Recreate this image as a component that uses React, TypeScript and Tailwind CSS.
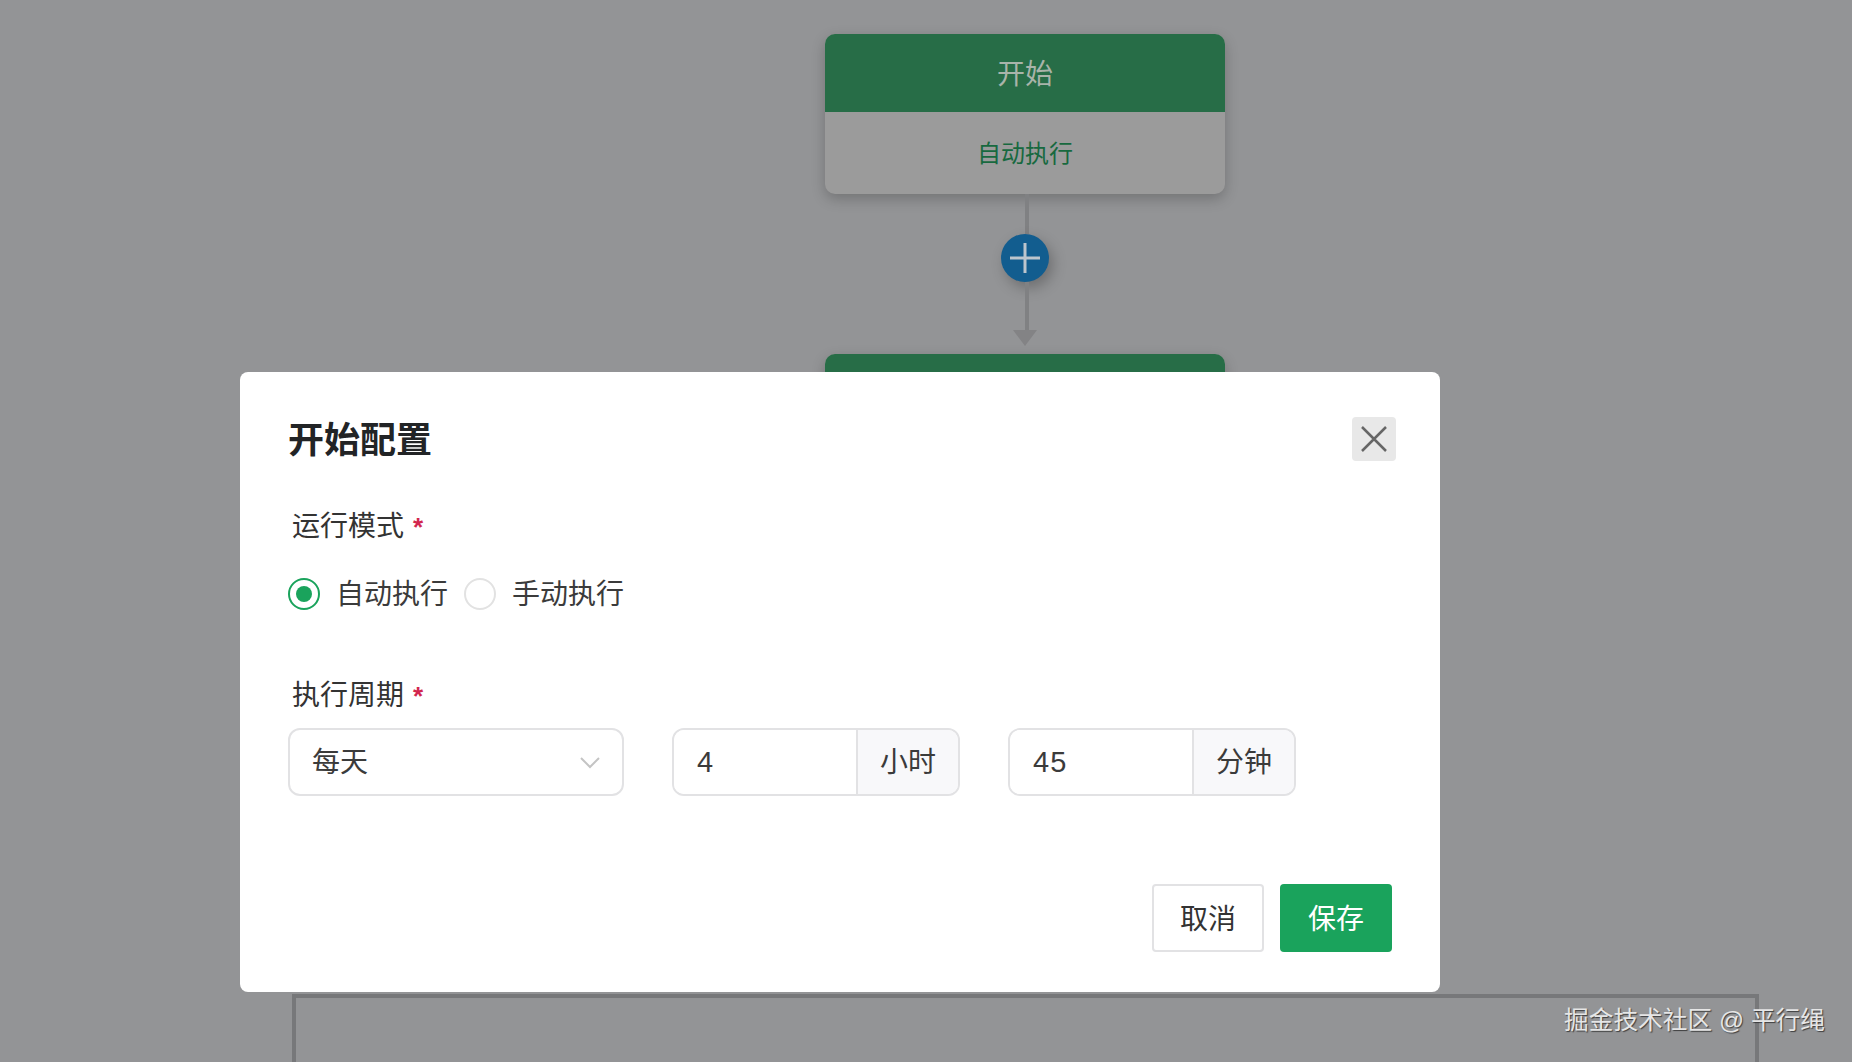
const FONT = "font-['Liberation_Sans','Noto_Sans_CJK_SC',sans-serif]";

function Node({ title, sub }: { title: string; sub: string }) {
  return (
    <div className="w-[400px] shrink-0 overflow-hidden rounded-[10px] bg-[#9b9b9b] shadow-[0_5px_14px_rgba(0,0,0,0.22)]">
      <div className="flex h-[78px] items-center justify-center bg-[#276d47] pt-[4px] text-[28px] text-[#a9b4aa]">{title}</div>
      <div className="flex h-[82px] items-center justify-center pt-[2px] text-[24px] text-[#17693f]">{sub}</div>
    </div>
  );
}

function Label({ text }: { text: string }) {
  return (
    <div className="flex h-[40px] items-center pl-[4px] pt-[4px] text-[28px] leading-none text-[#333333]">
      {text}
      <span className="ml-[9px] text-[26px] font-bold text-[#d2264f]">*</span>
    </div>
  );
}

function Radio({ label, checked }: { label: string; checked?: boolean }) {
  return (
    <div className="flex items-center">
      <span
        className={`flex h-[32px] w-[32px] items-center justify-center rounded-full border-2 ${
          checked ? "border-[#1aa35c]" : "border-[#e2e2e2]"
        }`}
      >
        {checked && <span className="h-[16px] w-[16px] rounded-full bg-[#1aa35c]" />}
      </span>
      <span className="ml-[16px] pt-[2px] text-[28px] leading-none text-[#3b3b3b]">{label}</span>
    </div>
  );
}

function UnitInput({ value, unit }: { value: string; unit: string }) {
  return (
    <div className="flex h-[68px] w-[288px] overflow-hidden rounded-[12px] border-2 border-[#e2e2e4]">
      <input
        readOnly
        value={value}
        className="w-[182px] bg-white pl-[23px] pt-[2px] text-[29px] tracking-[1px] text-[#3b3b3b] outline-none"
      />
      <div className="flex flex-1 items-center justify-center border-l-2 border-[#e2e2e4] bg-[#f8f8fa] pt-[2px] text-[28px] text-[#3b3b3b]">
        {unit}
      </div>
    </div>
  );
}

export default function App() {
  return (
    <div className={`relative h-[1062px] w-full overflow-hidden bg-[#939496] ${FONT}`}>
      {/* flow behind the dialog */}
      <div className="ml-[292px] flex h-[1062px] w-[1466px] flex-col items-center pt-[34px]">
        <Node title="开始" sub="自动执行" />
        <div className="ml-[4px] h-[40px] w-[4px] shrink-0 bg-[#808183]" />
        <div className="flex h-[48px] w-[48px] shrink-0 items-center justify-center rounded-full bg-[#125d8f] shadow-[4px_6px_14px_rgba(0,0,0,0.25)]">
          <svg width="32" height="32" viewBox="0 0 32 32" fill="none" stroke="#bcc5cd" strokeWidth="3">
            <path d="M16 1v30M1 16h30" />
          </svg>
        </div>
        <div className="ml-[4px] h-[48px] w-[4px] shrink-0 bg-[#808183]" />
        <svg width="24" height="16" viewBox="0 0 24 16" className="shrink-0">
          <path d="M0 0h24L12 16z" fill="#838385" />
        </svg>
        <div className="h-[8px] shrink-0" />
        <Node title="" sub="" />
        <div className="h-[480px] shrink-0" />
        <div className="h-[200px] w-[1467px] shrink-0 self-start border-4 border-[#77787a]" />
      </div>

      {/* dialog */}
      <div className="absolute left-[240px] top-[372px] h-[620px] w-[1200px] rounded-[8px] bg-white px-[48px] pt-[45px]">
        <div className="flex h-[44px] items-center justify-between">
          <h2 className="pt-[4px] text-[36px] font-bold leading-none text-[#222426]">开始配置</h2>
          <button className="mr-[-4px] flex h-[44px] w-[44px] items-center justify-center rounded-[4px] bg-[#e8e8e8]">
            <svg width="26" height="26" viewBox="0 0 26 26" fill="none" stroke="#666666" strokeWidth="2.5">
              <path d="M1 1l24 24M25 1L1 25" />
            </svg>
          </button>
        </div>

        <div className="mt-[44px]">
          <Label text="运行模式" />
        </div>
        <div className="mt-[31px] flex h-[36px] items-center gap-[16px]">
          <Radio label="自动执行" checked />
          <Radio label="手动执行" />
        </div>

        <div className="mt-[62px]">
          <Label text="执行周期" />
        </div>
        <div className="mt-[14px] flex gap-[48px]">
          <div className="flex h-[68px] w-[336px] items-center justify-between rounded-[12px] border-2 border-[#e2e2e4] pl-[22px] pr-[22px] pt-[2px] text-[28px] text-[#3b3b3b]">
            每天
            <svg width="20" height="12" viewBox="0 0 20 12" fill="none" stroke="#c4c4c4" strokeWidth="2">
              <path d="M1 1l9 9 9-9" />
            </svg>
          </div>
          <UnitInput value="4" unit="小时" />
          <UnitInput value="45" unit="分钟" />
        </div>

        <div className="mt-[88px] flex justify-end gap-[16px]">
          <button className="h-[68px] w-[112px] rounded-[4px] border-2 border-[#e2e2e4] bg-white pt-[4px] text-[28px] text-[#333333]">
            取消
          </button>
          <button className="h-[68px] w-[112px] rounded-[4px] bg-[#1aa35c] pt-[4px] text-[28px] text-white">保存</button>
        </div>
      </div>

      {/* watermark */}
      <div className="absolute left-[1564px] top-[1004px] text-[24.7px] leading-[34px] whitespace-nowrap text-[#e6e6e6] [text-shadow:1px_1px_1px_rgba(40,40,40,0.8)]">
        掘金技术社区 @ 平行绳
      </div>
    </div>
  );
}
